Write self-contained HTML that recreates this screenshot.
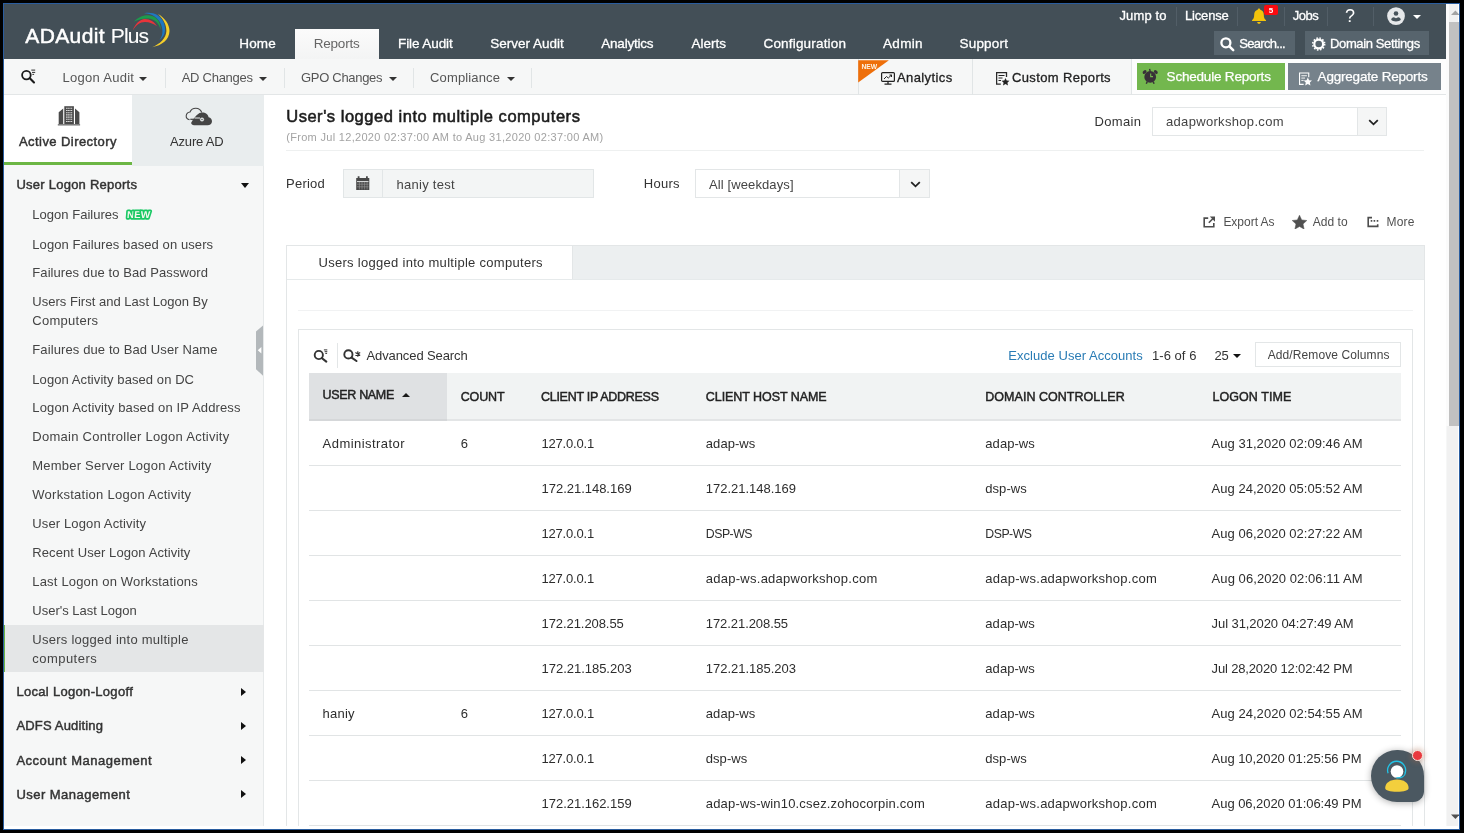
<!DOCTYPE html>
<html><head>
<meta charset="utf-8">
<title>ADAudit Plus</title>
<style>
*{box-sizing:border-box;margin:0;padding:0}
html,body{width:1464px;height:833px;overflow:hidden;background:#000}
body{font-family:"Liberation Sans",sans-serif;font-size:13px;color:#333;position:relative}
.a{position:absolute;white-space:nowrap}
.t{position:absolute;white-space:nowrap;line-height:20px;height:20px;margin-top:-10px}
#frame{position:absolute;left:3px;top:3px;width:1457px;height:826.700px;background:#2a5d9f}
#page{will-change:transform;position:absolute;left:4px;top:4px;width:1455px;height:824.600px;background:#fff;overflow:hidden}
/* header */
#hdr{position:absolute;left:0;top:0;width:1442px;height:55px;background:#434f57}
#hdr .t{color:#fff;font-size:13.5px;-webkit-text-stroke:.3px #fff}
.sep{position:absolute;width:1px;background:#525e67}
.hbtn{position:absolute;top:27px;height:24px;background:#57646d}
#tabrep{position:absolute;left:291px;top:25px;width:84px;height:30px;background:linear-gradient(#fbfbfb,#f3f4f4)}
/* subnav */
#sub{position:absolute;left:0;top:55px;width:1442px;height:36px;background:#f6f7f7;border-bottom:1px solid #e3e6e7}
#sub .t{font-size:13px;color:#555}
.vsep{position:absolute;width:1px;background:#e1e5e6}
.caret{position:absolute;width:0;height:0;border-left:4px solid transparent;border-right:4px solid transparent;border-top:4px solid #333}
/* sidebar */
#side{position:absolute;left:0;top:91px;width:260px;height:733px;background:#f6f7f7;border-right:1px solid #e6e9ea}
#side .t{font-size:13px;color:#444}
#side .h{color:#333;font-size:13px;-webkit-text-stroke-width:.45px}
.rarrow{position:absolute;width:0;height:0;border-top:4.600px solid transparent;border-bottom:4.600px solid transparent;border-left:5.600px solid #111}
/* main */
#main{position:absolute;left:261px;top:91px;width:1181px;height:733px;background:#fff}
/* scrollbar */
#sb{position:absolute;left:1442px;top:0;width:13px;height:824.600px;background:#fff}
#sbthumb{position:absolute;left:3px;top:18px;width:10px;height:404px;background:#c1c1c1}
</style>
</head>
<body>
<div id="frame"></div>
<div id="page">
<div id="hdr">
  <!-- logo -->
  <div class="t" style="left: 21.3px; top: 32.3px; font-size: 21px; height: 26px; line-height: 26px; margin-top: -13px; -webkit-text-stroke: 0.5px rgb(255, 255, 255); letter-spacing: 0.38px;">ADAudit</div>
  <div class="t" style="left: 106.8px; top: 32.3px; font-size: 21px; height: 26px; line-height: 26px; margin-top: -13px; -webkit-text-stroke: 0.1px rgb(255, 255, 255); letter-spacing: -0.92px;">Plus</div>
  <svg class="a" style="left:121px;top:1px" width="55" height="50" viewBox="125 5 55 50">
    <path d="M132.800 30.600C135 24 140 19.200 145 19.100C150 19.200 154.500 22 157 26.300C153.500 23.600 149.500 22 145 21.900C140 21.900 135.800 25.300 132.800 30.600Z" fill="#e8343a"></path>
    <path d="M134 21.700C138 17 143 15.200 148.500 15.200C156 15.600 161 21 160.600 29.800C159.300 23.600 154.300 18.800 148 18.600C143 18.600 138.500 19.400 134 21.700Z" fill="#1d9a4c"></path>
    <path d="M144 13.200C147 12.600 150 12.600 153 13.300C161 15.500 165.500 22.500 165 30.500C164.800 34.500 162.500 38 159.500 40C161.800 37 162.600 34 162.400 30.500C162 22.500 157 16.500 149.500 14C147.500 13.500 146 13.300 144 13.200Z" fill="#1e78c2"></path>
    <path d="M158 14C165 18 169.500 24.500 169.500 31C169.300 39.500 162 45.500 152 47.200C160 44 166 38.500 166.400 31C166.500 25 163.500 19 158 14Z" fill="#f6cf2a"></path>
  </svg>
  <div id="tabrep"></div>
  <div class="t" style="left: 235.3px; top: 39.8px; letter-spacing: 0.16px;">Home</div>
  <div class="t" style="left: 309.7px; top: 39.8px; color: rgb(102, 102, 102); -webkit-text-stroke: 0px; letter-spacing: -0.2px;">Reports</div>
  <div class="t" style="left: 394px; top: 39.8px; letter-spacing: -0.09px;">File Audit</div>
  <div class="t" style="left: 486.3px; top: 39.8px; letter-spacing: -0.01px;">Server Audit</div>
  <div class="t" style="left: 597.3px; top: 39.8px; letter-spacing: -0.23px;">Analytics</div>
  <div class="t" style="left: 687.5px; top: 39.8px;">Alerts</div>
  <div class="t" style="left: 759.5px; top: 39.8px; letter-spacing: 0.18px;">Configuration</div>
  <div class="t" style="left: 879px; top: 39.8px; letter-spacing: 0.31px;">Admin</div>
  <div class="t" style="left: 955.5px; top: 39.8px; letter-spacing: 0.2px;">Support</div>
  <!-- top right -->
  <div class="t" style="left: 1115.4px; top: 12px; font-size: 13px; letter-spacing: 0.16px;">Jump to</div>
  <div class="sep" style="left:1172px;top:3px;height:19px"></div>
  <div class="t" style="left: 1181px; top: 12px; font-size: 13px; letter-spacing: -0.17px;">License</div>
  <div class="sep" style="left:1233px;top:3px;height:19px"></div>
  <svg class="a" style="left:1247px;top:4px" width="16" height="17" viewBox="0 0 16 17"><path d="M8 0.5c.8 0 1.3.6 1.3 1.3 2.3.7 3.5 2.6 3.5 5 0 3 .8 4.400 2.200 5.400v.8H1v-.8c1.400-1 2.200-2.400 2.200-5.400 0-2.400 1.200-4.300 3.500-5C6.700 1.100 7.200.5 8 .5zM6.200 14h3.600c0 1-.8 1.800-1.800 1.800S6.200 15 6.200 14z" fill="#f3c40b"></path></svg>
  <div class="a" style="left:1260px;top:1.300px;width:14px;height:9.700px;background:#fb0a10;border-radius:2px"></div>
  <div class="a" style="left:1260px;top:1.800px;width:14px;height:9px;line-height:9px;text-align:center;color:#fff;font-size:8px;font-weight:bold">5</div>
  <div class="sep" style="left:1280px;top:3px;height:19px"></div>
  <div class="t" style="left: 1288.7px; top: 12px; font-size: 13px; letter-spacing: -0.46px;">Jobs</div>
  <div class="sep" style="left:1323px;top:3px;height:19px"></div>
  <div class="t" style="left:1341px;top:12px;font-size:18px;-webkit-text-stroke:0">?</div>
  <div class="sep" style="left:1369px;top:3px;height:19px"></div>
  <svg class="a" style="left:1381px;top:1px" width="22" height="22" viewBox="1385 5 22 22"><circle cx="1396" cy="16.100" r="8.900" fill="#e6e8ea"></circle><circle cx="1396" cy="13.500" r="2.300" fill="#47535b"></circle><path d="M1391.200 19.800C1391.200 18.200 1392.500 17.300 1393.800 17.200L1396 18.300L1398.200 17.200C1399.500 17.300 1400.800 18.200 1400.800 19.800C1400 20.900 1398 21.400 1396 21.400C1394 21.400 1392 20.900 1391.200 19.800Z" fill="#47535b"></path></svg>
  <div class="a" style="left:1408.900px;top:10.900px;width:0;height:0;border-left:4.300px solid transparent;border-right:4.300px solid transparent;border-top:4.600px solid #fff"></div>
  <!-- buttons -->
  <div class="hbtn" style="left:1210px;width:81px"></div>
  <svg class="a" style="left:1211px;top:29px" width="24" height="24" viewBox="1215 33 24 24"><circle cx="1225.900" cy="42.800" r="4.500" fill="none" stroke="#fff" stroke-width="2.300"></circle><path d="M1229.400 46.400L1233.200 50.200" stroke="#fff" stroke-width="2.500" stroke-linecap="round"></path></svg>
  <div class="t" style="left: 1235.2px; top: 39.8px; font-size: 13px; letter-spacing: -0.69px;">Search...</div>
  <div class="hbtn" style="left:1300.800px;width:124.200px"></div>
  <svg class="a" style="left:1306px;top:31px" width="18" height="18" viewBox="1310 35 18 18"><circle cx="1318.700" cy="44" r="4.400" fill="none" stroke="#fff" stroke-width="2.200"></circle><circle cx="1318.700" cy="44" r="6" fill="none" stroke="#fff" stroke-width="1.500" stroke-dasharray="1.600 1.540"></circle></svg>
  <div class="t" style="left: 1326px; top: 39.8px; font-size: 13px; letter-spacing: -0.37px;">Domain Settings</div>
</div>

<div id="sub">
  <svg class="a" style="left:10px;top:3px" width="30" height="30" viewBox="14 62 30 30"><circle cx="26.400" cy="75.100" r="4.300" fill="none" stroke="#1a1a1a" stroke-width="1.800"></circle><path d="M29.800 78.300L34 82.500" stroke="#1a1a1a" stroke-width="2.100" stroke-linecap="round"></path><path d="M31.300 70.100h3.900M32 72.400h3.200M32.400 74.400h1.700" stroke="#1a1a1a" stroke-width=".9"></path></svg>
  <div class="t" style="left: 58.4px; top: 19px; letter-spacing: 0.29px;">Logon Audit</div><div class="caret" style="left:135px;top:18px"></div>
  <div class="vsep" style="left:161px;top:9px;height:19.500px"></div>
  <div class="t" style="left: 177.7px; top: 19px; letter-spacing: -0.27px;">AD Changes</div><div class="caret" style="left:255px;top:18px"></div>
  <div class="vsep" style="left:280px;top:9px;height:19.500px"></div>
  <div class="t" style="left: 297px; top: 19px; letter-spacing: -0.3px;">GPO Changes</div><div class="caret" style="left:385px;top:18px"></div>
  <div class="vsep" style="left:409px;top:9px;height:19.500px"></div>
  <div class="t" style="left: 426px; top: 19px; letter-spacing: 0.15px;">Compliance</div><div class="caret" style="left:503px;top:18px"></div>
  <div class="vsep" style="left:527px;top:9px;height:19.500px"></div>
  <!-- right side -->
  <div class="vsep" style="left:854px;top:0;height:36px"></div>
  <div class="vsep" style="left:968px;top:0;height:36px"></div>
  <div class="vsep" style="left:1127px;top:0;height:36px"></div>
  <svg class="a" style="left:854px;top:1px" width="32" height="23" viewBox="858 60 32 23"><path d="M858.200 60.200H888.900L858.200 82.400Z" fill="#ee6f0a"></path><text x="861.400" y="68.700" font-family="Liberation Sans" font-size="7.600" font-weight="bold" fill="#fdf3e6" textLength="15.700" lengthAdjust="spacingAndGlyphs">NEW</text></svg>
  <svg class="a" style="left:877px;top:13px" width="14" height="13" viewBox="0 0 14 13"><rect x=".6" y=".6" width="12.800" height="8.800" rx="1" fill="none" stroke="#222" stroke-width="1.200"></rect><path d="M3 7l2.500-2.500 1.800 1.500L10.500 3M8.500 3h2v2" fill="none" stroke="#222" stroke-width="1"></path><path d="M7 9.500v2M3.500 12.200h7" stroke="#222" stroke-width="1.300"></path></svg>
  <div class="t" style="left: 893px; top: 19px; color: rgb(34, 34, 34); -webkit-text-stroke-width: 0.3px; letter-spacing: 0.4px;">Analytics</div>
  <svg class="a" style="left:992px;top:13px" width="14" height="14" viewBox="0 0 14 14"><path d="M10.500 5V.6H.6v11.600H4.800" fill="none" stroke="#2a2a2a" stroke-width="1.300"></path><path d="M2.500 3.500h6M2.500 6h4M2.500 8.500h2.500" stroke="#222" stroke-width="1"></path><path d="M9.500 6l1.200 2.500 2.700.3-2 1.900.6 2.700-2.500-1.400L7 13.400l.6-2.700-2-1.900 2.700-.3z" fill="#222"></path></svg>
  <div class="t" style="left: 1008px; top: 19px; color: rgb(34, 34, 34); -webkit-text-stroke-width: 0.3px; letter-spacing: 0.36px;">Custom Reports</div>
  <!-- buttons -->
  <div class="a" style="left:1128px;top:0;width:314px;height:35px;background:#fdfdfd"></div>
  <div class="a" style="left:1133px;top:4px;width:148px;height:27px;background:#73b74e"></div>
  <svg class="a" style="left:1136px;top:6px" width="24" height="22" viewBox="1140 65 24 22"><circle cx="1150.200" cy="76.900" r="5.900" fill="#383138"></circle><ellipse cx="1144.600" cy="72" rx="2.200" ry="1.500" fill="#383138" transform="rotate(-40 1144.600 72)"></ellipse><ellipse cx="1155.800" cy="72" rx="2.200" ry="1.500" fill="#383138" transform="rotate(40 1155.800 72)"></ellipse><path d="M1150.200 71.500L1149.600 68.800" stroke="#383138" stroke-width="1.400"></path><path d="M1147.300 81.500L1146.300 83.700M1153.100 81.500L1154.100 83.700" stroke="#383138" stroke-width="1.500"></path><path d="M1150.700 73.600V76.600H1153" fill="none" stroke="#73b74e" stroke-width="1.100"></path></svg>
  <div class="t" style="left: 1162.6px; top: 18.4px; color: rgb(255, 255, 255); font-size: 13.5px; -webkit-text-stroke-width: 0.25px; letter-spacing: -0.2px;">Schedule Reports</div>
  <div class="a" style="left:1284px;top:4px;width:153px;height:27px;background:#76828b"></div>
  <svg class="a" style="left:1294.500px;top:12.600px" width="13" height="14" viewBox="0 0 14 14"><path d="M10.500 5V.6H.6v12.200H5" fill="none" stroke="#fff" stroke-width="1.200"></path><path d="M2.500 3.500h6M2.500 6h4M2.500 8.500h2.500" stroke="#fff" stroke-width="1"></path><path d="M9.500 5.400l1.400 2.900 3.100.4-2.300 2.100.6 3.100-2.800-1.600-2.800 1.600.6-3.100-2.300-2.100 3.100-.4z" fill="#fff"></path></svg>
  <div class="t" style="left: 1313.6px; top: 18.4px; color: rgb(255, 255, 255); font-size: 13.5px; -webkit-text-stroke-width: 0.25px; letter-spacing: -0.2px;">Aggregate Reports</div>
</div>

<div id="side">
<div class="a" style="left:0;top:0;width:127.700px;height:70px;background:#fff;border-bottom:3px solid #6cb644"></div>
<div class="a" style="left:127.700px;top:0;width:132.300px;height:71px;background:#e9edee"></div>
<svg class="a" style="left:36px;top:3px" width="200" height="60" viewBox="40 98 200 60"><path d="M64.300 106.200h9.600v17.900h-9.600z" fill="#4a4a4a"></path><path d="M58.700 112.300L63.200 108.400V124.100h-4.500zM75 108.400L79.400 112.300v11.800H75z" fill="#4a4a4a"></path><path d="M57.800 124.300h22.300v1.100H57.800z" fill="#4a4a4a"></path><path d="M66 108.300h6.200M66 110.500h6.200M66 112.700h6.200M66 114.900h6.200M66 117.100h6.200M66 119.300h6.200M66 121.500h6.200" stroke="#d8d8d8" stroke-width="1.100" stroke-dasharray="1.300 .35"></path><path d="M192 124.500C191 123.500 191 122.500 191.600 121.900C193 119.500 195 116 199.500 113C201 112.300 203 112.200 204.500 112.800C206.800 113.600 208.200 115.200 208.600 117.200C210.800 117.600 212 119.300 212 121.200C212 123.600 210 125.300 207.600 125.300L194 125.300C193.200 125.300 192.500 125 192 124.500Z" fill="#454545"></path><path d="M189.500 119.600C187.300 119.400 186 117.700 186.200 115.700C186.500 113.500 188 112.200 190 112C191 109.600 193.200 108.300 195.800 108.300C198.600 108.300 200.800 109.900 201.700 112.500" fill="none" stroke="#454545" stroke-width="1.100"></path><path d="M190.300 119.300H199.600" stroke="#454545" stroke-width="1.200"></path><path d="M194.500 118H200" stroke="#e9edee" stroke-width="1"></path><circle cx="202" cy="119.500" r="1.800" fill="#e9edee" stroke="#e9edee" stroke-width=".4"></circle><circle cx="202" cy="119.500" r=".7" fill="#454545"></circle></svg>
<div class="t h" style="left: 15px; top: 46.6px; font-size: 13px; letter-spacing: 0.43px;">Active Directory</div>
<div class="t" style="left: 166px; top: 46.6px; font-size: 13px; color: rgb(51, 51, 51); letter-spacing: -0.17px;">Azure AD</div>
<div class="t h" style="left: 12.4px; top: 90.4px; letter-spacing: 0.25px;">User Logon Reports</div>
<div class="t h" style="left: 12.4px; top: 597.4px; letter-spacing: 0.31px;">Local Logon-Logoff</div>
<div class="t h" style="left: 12.4px; top: 631.2px; letter-spacing: 0.17px;">ADFS Auditing</div>
<div class="t h" style="left: 12.4px; top: 665.5px; letter-spacing: 0.52px;">Account Management</div>
<div class="t h" style="left: 12.4px; top: 700px; letter-spacing: 0.47px;">User Management</div>
<div class="a" style="left:236.500px;top:88px;width:0;height:0;border-left:4.800px solid transparent;border-right:4.800px solid transparent;border-top:5.200px solid #111"></div>
<div class="rarrow" style="left:237px;top:592.6px"></div>
<div class="rarrow" style="left:237px;top:626.7px"></div>
<div class="rarrow" style="left:237px;top:661.0px"></div>
<div class="rarrow" style="left:237px;top:695.4px"></div>
<div class="a" style="left:0;top:530px;width:260px;height:47px;background:#e4e6e7;border-left:1.500px solid #6cb644"></div>
<div class="t" style="left: 28.3px; top: 120.4px; letter-spacing: 0.02px;">Logon Failures</div>
<div class="t" style="left: 28.3px; top: 149.5px; letter-spacing: 0.08px;">Logon Failures based on users</div>
<div class="t" style="left: 28.3px; top: 178.3px; letter-spacing: 0.08px;">Failures due to Bad Password</div>
<div class="t" style="left: 28.3px; top: 207.3px; letter-spacing: 0.02px;">Users First and Last Logon By</div>
<div class="t" style="left: 28.3px; top: 226.3px; letter-spacing: 0.27px;">Computers</div>
<div class="t" style="left: 28.3px; top: 255.4px; letter-spacing: 0.11px;">Failures due to Bad User Name</div>
<div class="t" style="left: 28.3px; top: 284.5px; letter-spacing: 0.08px;">Logon Activity based on DC</div>
<div class="t" style="left: 28.3px; top: 313.3px; letter-spacing: 0.14px;">Logon Activity based on IP Address</div>
<div class="t" style="left: 28.3px; top: 342.4px; letter-spacing: 0.27px;">Domain Controller Logon Activity</div>
<div class="t" style="left: 28.3px; top: 371.2px; letter-spacing: 0.21px;">Member Server Logon Activity</div>
<div class="t" style="left: 28.3px; top: 400px; letter-spacing: 0.26px;">Workstation Logon Activity</div>
<div class="t" style="left: 28.3px; top: 428.8px; letter-spacing: 0.13px;">User Logon Activity</div>
<div class="t" style="left: 28.3px; top: 457.7px; letter-spacing: 0.08px;">Recent User Logon Activity</div>
<div class="t" style="left: 28.3px; top: 486.7px; letter-spacing: 0.18px;">Last Logon on Workstations</div>
<div class="t" style="left: 28.3px; top: 515.5px;">User's Last Logon</div>
<div class="t" style="left: 28.3px; top: 544.6px; letter-spacing: 0.26px;">Users logged into multiple</div>
<div class="t" style="left: 28.3px; top: 563.5px; letter-spacing: 0.46px;">computers</div>
<svg class="a" style="left:119px;top:111px" width="32" height="18" viewBox="123 206 32 18"><text x="126.800" y="218.300" font-family="Liberation Sans" font-weight="bold" font-size="10" fill="#f3f7ee" stroke="#1ac965" stroke-width="3.400" stroke-linejoin="round" paint-order="stroke" transform="skewX(-4)" style="transform-origin:127px 218px" textLength="23.200">NEW</text></svg>
<svg class="a" style="left:251.800px;top:229.700px" width="7.500" height="51.100" viewBox="0 0 7.500 51.100"><path d="M7.500 0V51.100L0 44.300V6.500Z" fill="#b3b8bb"></path><path d="M1.800 25.300L5.400 22.100v6.400z" fill="#fff"></path></svg>
</div>

<div id="main"></div>
<div class="t" style="left: 282.2px; top: 111.8px; font-size: 16.5px; color: rgb(28, 28, 28); -webkit-text-stroke-width: 0.55px; letter-spacing: 0.53px;">User's logged into multiple computers</div>
<div class="t" style="left: 282.2px; top: 133.2px; font-size: 11px; color: rgb(163, 163, 163); letter-spacing: 0.31px;">(From Jul 12,2020 02:37:00 AM to Aug 31,2020 02:37:00 AM)</div>
<div class="a" style="left:282.0px;top:145.6px;width:1138.0px;height:1.0px;background:#eef0f0"></div>
<div class="t" style="left: 1090.5px; top: 117.5px; font-size: 13px; color: rgb(51, 51, 51); letter-spacing: 0.34px;">Domain</div>
<div class="a" style="left:1148.0px;top:103.0px;width:235.0px;height:28.5px;background:#fff;border:1px solid #e3e6e7"></div>
<div class="a" style="left:1353.0px;top:104.0px;width:29.0px;height:26.5px;background:#f5f6f6;border-left:1px solid #e3e6e7"></div>
<div class="t" style="left: 1162px; top: 117.5px; font-size: 13px; color: rgb(68, 68, 68); letter-spacing: 0.32px;">adapworkshop.com</div>
<svg class="a" style="left:1363.500px;top:114.500px" width="11" height="7" viewBox="0 0 11 7"><path d="M1.200 1.200L5.500 5.300L9.800 1.200" fill="none" stroke="#222" stroke-width="1.800"></path></svg>
<div class="t" style="left: 282px; top: 180.3px; font-size: 13px; color: rgb(51, 51, 51); letter-spacing: 0.24px;">Period</div>
<div class="a" style="left:338.5px;top:165.0px;width:251.1px;height:28.5px;background:#f3f5f5;border:1px solid #e2e6e7"></div>
<div class="a" style="left:378.0px;top:166.0px;width:1.0px;height:26.5px;background:#e2e6e7"></div>
<svg class="a" style="left:350px;top:170px" width="24" height="24" viewBox="354 174 24 24"><path d="M356.200 178h13.100v12h-13.100z" fill="#484848"></path><path d="M358.600 176.300v2.500M366.900 176.300v2.500" stroke="#484848" stroke-width="1.800"></path><path d="M357 181.600h11.500" stroke="#f3f5f5" stroke-width=".9"></path><path d="M357 184.200h11.500M357 186.800h11.500" stroke="#9a9a9a" stroke-width=".6"></path><path d="M359.400 182v7.500M362 182v7.500M364.600 182v7.500M367.100 182v7.500" stroke="#9a9a9a" stroke-width=".6"></path></svg>
<div class="t" style="left: 392.5px; top: 181px; font-size: 13px; color: rgb(68, 68, 68); letter-spacing: 0.27px;">haniy test</div>
<div class="t" style="left: 639.8px; top: 180.3px; font-size: 13px; color: rgb(51, 51, 51); letter-spacing: 0.28px;">Hours</div>
<div class="a" style="left:691.0px;top:165.0px;width:234.5px;height:28.5px;background:#fff;border:1px solid #e3e6e7"></div>
<div class="a" style="left:895.0px;top:166.0px;width:29.5px;height:26.5px;background:#f5f6f6;border-left:1px solid #e3e6e7"></div>
<div class="t" style="left: 705px; top: 181px; font-size: 13px; color: rgb(68, 68, 68); letter-spacing: 0.11px;">All [weekdays]</div>
<svg class="a" style="left:905.500px;top:176.500px" width="11" height="7" viewBox="0 0 11 7"><path d="M1.200 1.200L5.500 5.300L9.800 1.200" fill="none" stroke="#222" stroke-width="1.800"></path></svg>
<svg class="a" style="left:1196px;top:209px" width="20" height="20" viewBox="1200 213 20 20"><path d="M1208.200 218.100H1204.200V226.800H1213.800V223" fill="none" stroke="#4d4d4d" stroke-width="1.600"></path><path d="M1209.800 216.600h5.200v5.200z" fill="#4d4d4d"></path><path d="M1213.600 218L1208.800 222.800" stroke="#4d4d4d" stroke-width="1.600"></path></svg>
<div class="t" style="left: 1219.4px; top: 218px; font-size: 12px; color: rgb(80, 80, 80); letter-spacing: -0.02px;">Export As</div>
<svg class="a" style="left:1288.200px;top:210.700px" width="15" height="14.500" viewBox="0 0 15 14.500"><path d="M7.500 .2l2.200 4.700 5.100.6-3.800 3.500 1.100 5.100-4.600-2.600L2.900 14.100 4 9 .2 5.500l5.100-.6z" fill="#505050" stroke="#505050" stroke-width=".5" stroke-linejoin="round"></path></svg>
<div class="t" style="left: 1308.8px; top: 218px; font-size: 12px; color: rgb(80, 80, 80); letter-spacing: 0.02px;">Add to</div>
<svg class="a" style="left:1361px;top:210px" width="20" height="20" viewBox="1365 214 20 20"><path d="M1372 217.600H1368.200V226.400H1377.700V224.300" fill="none" stroke="#4d4d4d" stroke-width="1.600"></path><path d="M1370.700 220.900h1.600M1373.600 220.900h1.600M1376.700 220.900h1.600" stroke="#4d4d4d" stroke-width="1.700"></path></svg>
<div class="t" style="left: 1382.5px; top: 218px; font-size: 12px; color: rgb(80, 80, 80); letter-spacing: 0.19px;">More</div>
<div class="a" style="left:282.0px;top:241.0px;width:1138.5px;height:588.0px;background:#fff;border:1px solid #e3e6e7"></div>
<div class="a" style="left:283.0px;top:242.0px;width:1136.5px;height:34.0px;background:#eceff0"></div>
<div class="a" style="left:282.0px;top:241.0px;width:287.2px;height:34.3px;background:#fff;border:1px solid #e3e6e7;border-bottom:none"></div>
<div class="a" style="left:283.0px;top:275.3px;width:1136.5px;height:1.0px;background:#e6eaeb"></div>
<div class="t" style="left: 314.5px; top: 258.6px; font-size: 13px; color: rgb(51, 51, 51); letter-spacing: 0.29px;">Users logged into multiple computers</div>
<div class="a" style="left:293.5px;top:306.0px;width:1115.0px;height:1.0px;background:#f1f2f3"></div>
<div class="a" style="left:293.5px;top:324.8px;width:1115.5px;height:504.2px;background:#fff;border:1px solid #e3e6e7"></div>
<svg class="a" style="left:306px;top:341px" width="60" height="26" viewBox="310 345 60 26"><circle cx="318.800" cy="355" r="4.100" fill="none" stroke="#333" stroke-width="1.900"></circle><path d="M322 358.200L326.300 361.600" stroke="#333" stroke-width="2.100" stroke-linecap="round"></path><path d="M323.900 349.900h3.400M324.600 351.700h2.700M325.300 353.400h1.800" stroke="#333" stroke-width="1"></path><circle cx="348.400" cy="354.400" r="4.100" fill="none" stroke="#333" stroke-width="1.900"></circle><path d="M351.600 357.600L356.500 361" stroke="#333" stroke-width="2.100" stroke-linecap="round"></path><path d="M357.800 351.200v5.600M355.400 352.600l4.800 2.800M360.200 352.600l-4.800 2.800" stroke="#333" stroke-width="1.200"></path></svg>
<div class="a" style="left:332.8px;top:338.5px;width:1.0px;height:25.5px;background:#e3e6e7"></div>
<div class="t" style="left: 362.5px; top: 351.6px; font-size: 13px; color: rgb(51, 51, 51); letter-spacing: -0.1px;">Advanced Search</div>
<div class="t" style="left: 1004.3px; top: 351.6px; font-size: 13px; color: rgb(42, 124, 181); letter-spacing: 0.04px;">Exclude User Accounts</div>
<div class="t" style="left: 1148px; top: 351.6px; font-size: 13px; color: rgb(51, 51, 51); letter-spacing: 0.04px;">1-6 of 6</div>
<div class="t" style="left: 1210.4px; top: 351.6px; font-size: 13px; color: rgb(51, 51, 51); letter-spacing: -0.07px;">25</div>
<div class="caret" style="left:1229px;top:350px;border-top-color:#111"></div>
<div class="a" style="left:1250.8px;top:338.3px;width:146.2px;height:24.7px;background:#fff;border:1px solid #e3e6e7"></div>
<div class="t" style="left: 1263.7px; top: 351px; font-size: 12px; color: rgb(68, 68, 68); letter-spacing: 0.1px;">Add/Remove Columns</div>
<div class="a" style="left:305.0px;top:368.8px;width:1092.0px;height:48.0px;background:#f1f3f3;border-bottom:2px solid #e3e5e6"></div>
<div class="a" style="left:305.0px;top:368.8px;width:138.0px;height:48.0px;background:#dfe1e3;border-bottom:2px solid #d5d7d9"></div>
<div class="t" style="left: 318.6px; top: 391px; font-size: 12.5px; color: rgb(34, 34, 34); -webkit-text-stroke-width: 0.45px; letter-spacing: -0.33px;">USER NAME</div>
<div class="a" style="left:398.400px;top:389px;width:0;height:0;border-left:4.500px solid transparent;border-right:4.500px solid transparent;border-bottom:4.200px solid #1a1a1a"></div>
<div class="t" style="left: 456.7px; top: 393px; font-size: 12.5px; color: rgb(34, 34, 34); -webkit-text-stroke-width: 0.45px; letter-spacing: -0.14px;">COUNT</div>
<div class="t" style="left: 537px; top: 393px; font-size: 12.5px; color: rgb(34, 34, 34); -webkit-text-stroke-width: 0.45px; letter-spacing: -0.28px;">CLIENT IP ADDRESS</div>
<div class="t" style="left: 701.8px; top: 393px; font-size: 12.5px; color: rgb(34, 34, 34); -webkit-text-stroke-width: 0.45px; letter-spacing: -0.06px;">CLIENT HOST NAME</div>
<div class="t" style="left: 981.3px; top: 393px; font-size: 12.5px; color: rgb(34, 34, 34); -webkit-text-stroke-width: 0.45px; letter-spacing: 0.03px;">DOMAIN CONTROLLER</div>
<div class="t" style="left: 1208.4px; top: 393px; font-size: 12.5px; color: rgb(34, 34, 34); -webkit-text-stroke-width: 0.45px; letter-spacing: 0.09px;">LOGON TIME</div>
<div class="t" style="left: 318.6px; top: 439.9px; font-size: 13px; color: rgb(45, 45, 45); letter-spacing: 0.45px;">Administrator</div>
<div class="t" style="left: 456.7px; top: 439.9px; font-size: 13px; color: rgb(45, 45, 45);">6</div>
<div class="t" style="left: 537.5px; top: 439.9px; font-size: 13px; color: rgb(45, 45, 45); letter-spacing: -0.2px;">127.0.0.1</div>
<div class="t" style="left: 701.8px; top: 439.9px; font-size: 13px; color: rgb(45, 45, 45); letter-spacing: 0.06px;">adap-ws</div>
<div class="t" style="left: 981.3px; top: 439.9px; font-size: 13px; color: rgb(45, 45, 45); letter-spacing: 0.06px;">adap-ws</div>
<div class="t" style="left: 1207.6px; top: 439.9px; font-size: 13px; color: rgb(45, 45, 45); letter-spacing: 0.03px;">Aug 31,2020 02:09:46 AM</div>
<div class="a" style="left:305.0px;top:460.8px;width:1092.0px;height:1.0px;background:#e1e4e5"></div>
<div class="t" style="left: 537.5px; top: 484.9px; font-size: 13px; color: rgb(45, 45, 45); letter-spacing: -0.02px;">172.21.148.169</div>
<div class="t" style="left: 701.8px; top: 484.9px; font-size: 13px; color: rgb(45, 45, 45); letter-spacing: -0.02px;">172.21.148.169</div>
<div class="t" style="left: 981.3px; top: 484.9px; font-size: 13px; color: rgb(45, 45, 45); letter-spacing: 0.04px;">dsp-ws</div>
<div class="t" style="left: 1207.6px; top: 484.9px; font-size: 13px; color: rgb(45, 45, 45); letter-spacing: 0.03px;">Aug 24,2020 05:05:52 AM</div>
<div class="a" style="left:305.0px;top:505.8px;width:1092.0px;height:1.0px;background:#e1e4e5"></div>
<div class="t" style="left: 537.5px; top: 529.9px; font-size: 13px; color: rgb(45, 45, 45); letter-spacing: -0.2px;">127.0.0.1</div>
<div class="t" style="left: 701.8px; top: 529.9px; font-size: 12.3px; color: rgb(45, 45, 45); letter-spacing: -0.5px;">DSP-WS</div>
<div class="t" style="left: 981.3px; top: 529.9px; font-size: 12.3px; color: rgb(45, 45, 45); letter-spacing: -0.5px;">DSP-WS</div>
<div class="t" style="left: 1207.6px; top: 529.9px; font-size: 13px; color: rgb(45, 45, 45); letter-spacing: 0.03px;">Aug 06,2020 02:27:22 AM</div>
<div class="a" style="left:305.0px;top:550.8px;width:1092.0px;height:1.0px;background:#e1e4e5"></div>
<div class="t" style="left: 537.5px; top: 574.9px; font-size: 13px; color: rgb(45, 45, 45); letter-spacing: -0.2px;">127.0.0.1</div>
<div class="t" style="left: 701.8px; top: 574.9px; font-size: 13px; color: rgb(45, 45, 45); letter-spacing: 0.26px;">adap-ws.adapworkshop.com</div>
<div class="t" style="left: 981.3px; top: 574.9px; font-size: 13px; color: rgb(45, 45, 45); letter-spacing: 0.26px;">adap-ws.adapworkshop.com</div>
<div class="t" style="left: 1207.6px; top: 574.9px; font-size: 13px; color: rgb(45, 45, 45); letter-spacing: 0.07px;">Aug 06,2020 02:06:11 AM</div>
<div class="a" style="left:305.0px;top:595.8px;width:1092.0px;height:1.0px;background:#e1e4e5"></div>
<div class="t" style="left: 537.5px; top: 619.9px; font-size: 13px; color: rgb(45, 45, 45); letter-spacing: -0.07px;">172.21.208.55</div>
<div class="t" style="left: 701.8px; top: 619.9px; font-size: 13px; color: rgb(45, 45, 45); letter-spacing: -0.07px;">172.21.208.55</div>
<div class="t" style="left: 981.3px; top: 619.9px; font-size: 13px; color: rgb(45, 45, 45); letter-spacing: 0.06px;">adap-ws</div>
<div class="t" style="left: 1207.6px; top: 619.9px; font-size: 13px; color: rgb(45, 45, 45); letter-spacing: -0.08px;">Jul 31,2020 04:27:49 AM</div>
<div class="a" style="left:305.0px;top:640.8px;width:1092.0px;height:1.0px;background:#e1e4e5"></div>
<div class="t" style="left: 537.5px; top: 664.9px; font-size: 13px; color: rgb(45, 45, 45); letter-spacing: -0.02px;">172.21.185.203</div>
<div class="t" style="left: 701.8px; top: 664.9px; font-size: 13px; color: rgb(45, 45, 45); letter-spacing: -0.02px;">172.21.185.203</div>
<div class="t" style="left: 981.3px; top: 664.9px; font-size: 13px; color: rgb(45, 45, 45); letter-spacing: 0.06px;">adap-ws</div>
<div class="t" style="left: 1207.6px; top: 664.9px; font-size: 13px; color: rgb(45, 45, 45); letter-spacing: -0.16px;">Jul 28,2020 12:02:42 PM</div>
<div class="a" style="left:305.0px;top:685.8px;width:1092.0px;height:1.0px;background:#e1e4e5"></div>
<div class="t" style="left: 318.6px; top: 709.9px; font-size: 13px; color: rgb(45, 45, 45); letter-spacing: 0.23px;">haniy</div>
<div class="t" style="left: 456.7px; top: 709.9px; font-size: 13px; color: rgb(45, 45, 45);">6</div>
<div class="t" style="left: 537.5px; top: 709.9px; font-size: 13px; color: rgb(45, 45, 45); letter-spacing: -0.2px;">127.0.0.1</div>
<div class="t" style="left: 701.8px; top: 709.9px; font-size: 13px; color: rgb(45, 45, 45); letter-spacing: 0.06px;">adap-ws</div>
<div class="t" style="left: 981.3px; top: 709.9px; font-size: 13px; color: rgb(45, 45, 45); letter-spacing: 0.06px;">adap-ws</div>
<div class="t" style="left: 1207.6px; top: 709.9px; font-size: 13px; color: rgb(45, 45, 45); letter-spacing: 0.03px;">Aug 24,2020 02:54:55 AM</div>
<div class="a" style="left:305.0px;top:730.8px;width:1092.0px;height:1.0px;background:#e1e4e5"></div>
<div class="t" style="left: 537.5px; top: 754.9px; font-size: 13px; color: rgb(45, 45, 45); letter-spacing: -0.2px;">127.0.0.1</div>
<div class="t" style="left: 701.8px; top: 754.9px; font-size: 13px; color: rgb(45, 45, 45); letter-spacing: 0.04px;">dsp-ws</div>
<div class="t" style="left: 981.3px; top: 754.9px; font-size: 13px; color: rgb(45, 45, 45); letter-spacing: 0.04px;">dsp-ws</div>
<div class="t" style="left: 1207.6px; top: 754.9px; font-size: 13px; color: rgb(45, 45, 45); letter-spacing: -0.05px;">Aug 10,2020 01:25:56 PM</div>
<div class="a" style="left:305.0px;top:775.8px;width:1092.0px;height:1.0px;background:#e1e4e5"></div>
<div class="t" style="left: 537.5px; top: 799.9px; font-size: 13px; color: rgb(45, 45, 45); letter-spacing: -0.02px;">172.21.162.159</div>
<div class="t" style="left: 701.8px; top: 799.9px; font-size: 13px; color: rgb(45, 45, 45); letter-spacing: 0.18px;">adap-ws-win10.csez.zohocorpin.com</div>
<div class="t" style="left: 981.3px; top: 799.9px; font-size: 13px; color: rgb(45, 45, 45); letter-spacing: 0.26px;">adap-ws.adapworkshop.com</div>
<div class="t" style="left: 1207.6px; top: 799.9px; font-size: 13px; color: rgb(45, 45, 45); letter-spacing: -0.05px;">Aug 06,2020 01:06:49 PM</div>
<div class="a" style="left:305.0px;top:820.8px;width:1092.0px;height:1.0px;background:#e1e4e5"></div>
<div class="a" style="left:1367.300px;top:745.700px;width:52.600px;height:52.500px;background:#4b5861;border-radius:26.300px 26.300px 11px 26.300px;box-shadow:0 1px 7px rgba(0,0,0,.32)"></div>
<svg class="a" style="left:1356px;top:736px" width="80" height="70" viewBox="1360 740 80 70"><circle cx="1397" cy="771.500" r="6.300" fill="#fff"></circle><path d="M1388.100 773.200A9 9 0 1 1 1405.100 773.200" fill="none" stroke="#22c3e6" stroke-width="1.300"></path><path d="M1405.300 772.500C1405.300 776.500 1401.500 778.300 1396.300 777.900" fill="none" stroke="#22c3e6" stroke-width="1.200"></path><path d="M1385.200 788C1385.200 783 1390 779.500 1397 779.500C1404 779.500 1408.600 783 1408.600 788C1408.600 790.500 1404 791.700 1397 791.700C1390 791.700 1385.200 790.500 1385.200 788Z" fill="#f3cf3d"></path></svg>
<div class="a" style="left:1408.200px;top:745.700px;width:11.200px;height:11.200px;border-radius:6px;background:#e8393e;border:1px solid #f7e8e0;box-shadow:0 0 5px 2px rgba(170,110,80,.35)"></div>

<div id="sb">
  <div class="a" style="left:0;top:0;width:12px;height:821.600px;background:#f1f1f1"></div>
  <div class="a" style="left:0;top:0;width:1px;height:821.600px;background:#f6f7f7"></div>
  <div id="sbthumb"></div>
  <div class="a" style="left:0;top:0;width:3px;height:422px;background:#fbfbfb"></div>
  <svg class="a" style="left:5px;top:6px" width="8" height="6" viewBox="0 0 8 6"><path d="M0 5L4.400 .5L8.800 5z" fill="#a3a3a3"></path></svg>
  <svg class="a" style="left:5px;top:809.500px" width="8" height="6" viewBox="0 0 8 6"><path d="M0 .5L4.400 5L8.800 .5z" fill="#505050"></path></svg>
</div>

<div class="a" style="left:0;top:821.600px;width:1455px;height:4px;background:#fff"></div>
</div>


</body></html>
